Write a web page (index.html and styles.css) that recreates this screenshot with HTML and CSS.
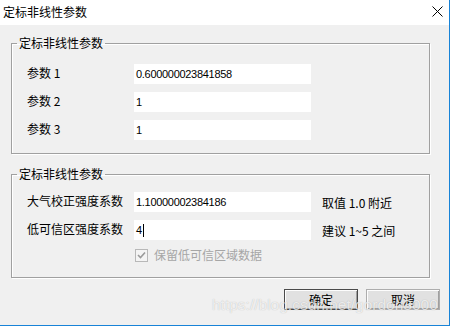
FILE: index.html
```html
<!DOCTYPE html>
<html lang="zh-CN">
<head>
    <meta charset="UTF-8">
    <title>定标非线性参数</title>
    <link rel="stylesheet" href="styles.css">
</head>
<body>

<div class="dlg">
    <div class="titleBar">
        <span class="titleText">定标非线性参数</span>
        <svg class="closeX" width="11" height="11" viewBox="0 0 11 11">
            <path d="M0.5 0.5 L10.5 10.5 M10.5 0.5 L0.5 10.5" stroke="#000" stroke-width="1" fill="none"/>
        </svg>
    </div>

    <div class="dlgBody">
        <fieldset class="grp grpOne">
            <legend>定标非线性参数</legend>
            <div class="grpInner">
                <div class="row">
                    <span class="lbl">参数 1</span>
                    <div class="edit">0.600000023841858</div>
                </div>
                <div class="row">
                    <span class="lbl">参数 2</span>
                    <div class="edit">1</div>
                </div>
                <div class="row">
                    <span class="lbl">参数 3</span>
                    <div class="edit">1</div>
                </div>
            </div>
        </fieldset>

        <fieldset class="grp grpTwo">
            <legend>定标非线性参数</legend>
            <div class="grpInner">
                <div class="row">
                    <span class="lbl">大气校正强度系数</span>
                    <div class="edit">1.10000002384186</div>
                    <span class="hint">取值 1.0 附近</span>
                </div>
                <div class="row">
                    <span class="lbl">低可信区强度系数</span>
                    <div class="edit">4<span class="caret"></span></div>
                    <span class="hint">建议 1~5 之间</span>
                </div>
                <div class="row chkRow">
                    <span class="lbl"></span>
                    <span class="chk">
                        <svg width="9" height="9" viewBox="0 0 9 9">
                            <path d="M1 4 L3.5 6.5 L8 1.5" stroke="#9a9a9a" stroke-width="1.6" fill="none"/>
                        </svg>
                    </span>
                    <span class="chkText">保留低可信区域数据</span>
                </div>
            </div>
        </fieldset>

        <div class="btnBar">
            <button class="btn btnDefault">确定</button>
            <button class="btn">取消</button>
        </div>
    </div>
</div>

<div class="watermark">https://blog.csdn.net/gordon3000</div>

</body>
</html>
```

FILE: styles.css
```css
html, body {
    margin: 0;
    padding: 0;
    background: #ffffff;
}

body {
    width: 451px;
    height: 328px;
    position: relative;
    overflow: hidden;
    font-family: "Noto Sans CJK SC", sans-serif;
    font-size: 12px;
    color: #000;
}

.dlg {
    width: 449px;
    height: 325px;
    border-right: 1px solid #1883d7;
    border-bottom: 1px solid #1883d7;
    background: #f0f0f0;
    display: flex;
    flex-direction: column;
}

.titleBar {
    height: 25px;
    background: #ffffff;
    display: flex;
    align-items: center;
    justify-content: space-between;
    padding: 0 6px 0 3px;
}

.titleText {
    font-size: 12px;
    line-height: 16px;
    margin-top: -2px;
}

.closeX {
    margin-top: -2px;
}

.dlgBody {
    flex: 1;
    display: flex;
    flex-direction: column;
    padding: 10px 0 0 11px;
}

.grp {
    margin: 0;
    padding: 0;
    width: 417px;
    border: 1px solid #a0a0a0;
    box-shadow: 1px 1px 0 #ffffff, inset 1px 1px 0 #ffffff;
}

.grp legend {
    margin-left: 5px;
    padding: 0 2px;
    font-size: 12px;
    line-height: 16px;
}

.grpOne .grpInner {
    padding: 13px 0 13px 15px;
}

.grpTwo {
    margin-top: 12px;
}

.grpTwo .grpInner {
    padding: 10px 0 15px 15px;
}

.grpInner {
    display: flex;
    flex-direction: column;
    gap: 8px;
}

.row {
    display: flex;
    align-items: center;
    height: 20px;
}

.lbl {
    width: 107px;
    flex: none;
    line-height: 16px;
    margin-top: -3px;
}

.edit {
    width: 175px;
    height: 20px;
    flex: none;
    background: #ffffff;
    padding-left: 2px;
    font-family: "Liberation Sans", sans-serif;
    font-size: 11px;
    letter-spacing: -0.3px;
    line-height: 18px;
    display: flex;
    align-items: center;
}

.caret {
    display: inline-block;
    width: 1px;
    height: 13px;
    background: #000;
    margin-left: 1px;
}

.hint {
    margin-left: 11px;
    line-height: 16px;
    margin-top: 1px;
}

.chkRow {
    height: 14px;
}

.chk {
    width: 11px;
    height: 11px;
    border: 1px solid #b8b8b8;
    background: #f4f4f4;
    display: flex;
    align-items: center;
    justify-content: center;
    flex: none;
    margin-left: 1px;
}

.chkText {
    margin-left: 6px;
    color: #a6a6a6;
    line-height: 16px;
}

.btnBar {
    display: flex;
    justify-content: flex-end;
    gap: 8px;
    padding: 11px 9px 0 0;
}

.btn {
    width: 74px;
    height: 21px;
    margin: 0;
    padding: 0;
    background: #e1e1e1;
    border: 1px solid #adadad;
    box-shadow: inset 1px 1px 0 #fdfdfd, inset -1px -1px 0 #a0a0a0;
    font-family: "Noto Sans CJK SC", sans-serif;
    font-size: 12px;
    line-height: 16px;
    color: #000;
}

.btnDefault {
    border-color: #4a4a4a;
}

.watermark {
    position: absolute;
    left: 212px;
    top: 296px;
    font-family: "Liberation Sans", sans-serif;
    font-size: 15.5px;
    line-height: 18px;
    color: rgba(255, 255, 255, 0.75);
    text-shadow: 0 0 1px rgba(0, 0, 0, 0.25);
    white-space: nowrap;
}
```
